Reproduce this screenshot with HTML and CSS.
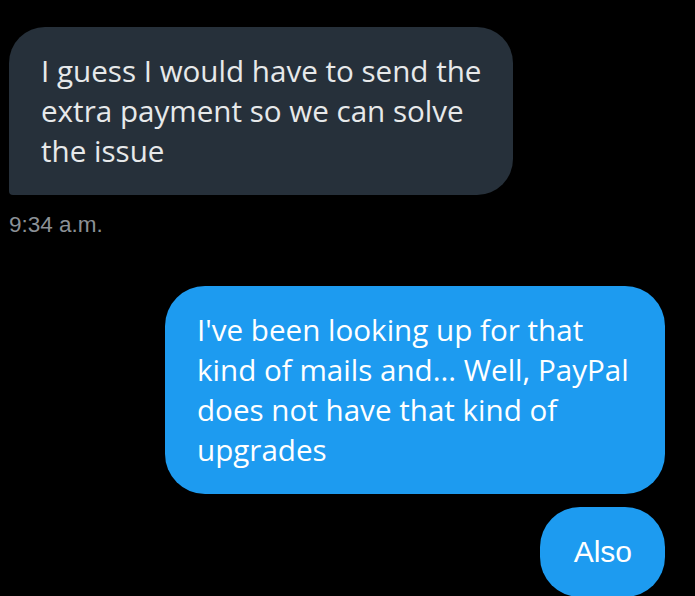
FILE: index.html
```html
<!DOCTYPE html>
<html lang="en">
<head>
  <meta charset="UTF-8" />
  <meta name="viewport" content="width=device-width, initial-scale=1.0"/>
  <title>Messages</title>
  <link rel="stylesheet" href="styles.css">
</head>
<body>
  <div class="chat">
    <div class="msg msg-in">
      <div class="bubble bubble-in">I guess I would have to send the<br>extra payment so we can solve<br>the issue</div>
      <div class="time">9:34 a.m.</div>
    </div>

    <div class="msg msg-out">
      <div class="bubble bubble-out">I've been looking up for that<br>kind of mails and... Well, PayPal<br>does not have that kind of<br>upgrades</div>
      <div class="bubble bubble-out bubble-short">Also</div>
    </div>
  </div>
</body>
</html>
```

FILE: styles.css
```css
body {
  margin: 0;
  padding: 0;
  background: #000;
  font-family: 'Open Sans', sans-serif;
  overflow: hidden;
}

.chat {
  padding: 27px 30px 0 9px;
  display: flex;
  flex-direction: column;
}

.msg {
  display: flex;
  flex-direction: column;
}

.msg-in {
  align-items: flex-start;
}

.msg-out {
  align-items: flex-end;
  margin-top: 47px;
  gap: 13px;
}

.bubble {
  box-sizing: border-box;
  padding: 24px 32px;
  font-size: 29.6px;
  line-height: 40px;
  white-space: nowrap;
}

.bubble-in {
  width: 504px;
  background-color: #26303a;
  color: #e7e9ea;
  border-radius: 36px 36px 36px 4px;
}

.bubble-out {
  width: 500px;
  background-color: #1d9bf0;
  color: #fff;
  border-radius: 40px;
}

.bubble-short {
  width: auto;
  font-family: 'Liberation Sans', Arial, sans-serif;
  font-size: 30px;
  padding: 25px 33px 25px 34px;
}

.time {
  margin-top: 16px;
  font-family: 'Liberation Sans', Arial, sans-serif;
  font-size: 22.5px;
  line-height: 28px;
  color: #8b9096;
}
```
